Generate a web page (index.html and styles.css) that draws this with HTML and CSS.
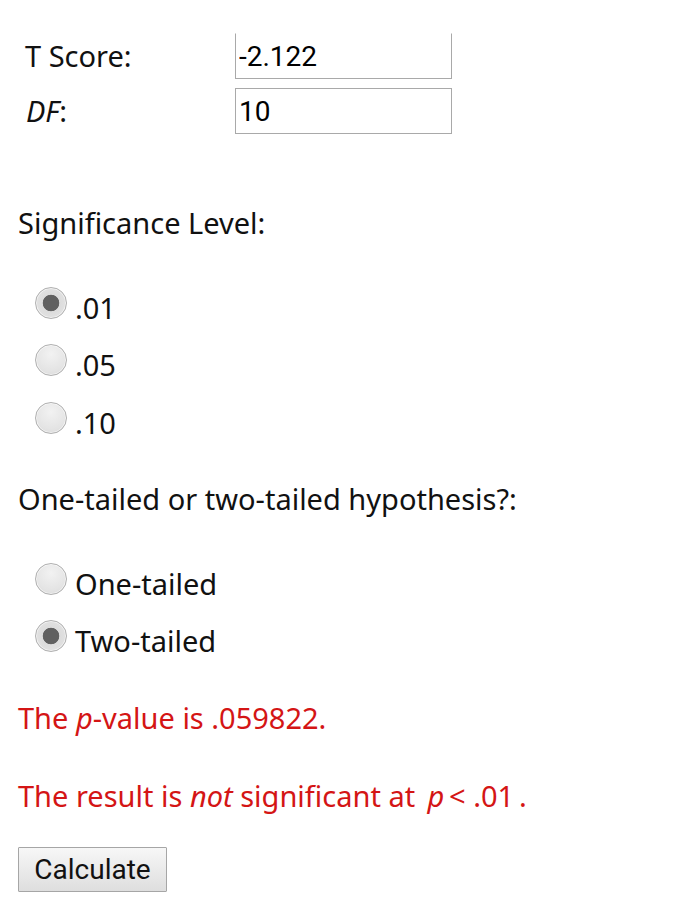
FILE: index.html
```html
<!DOCTYPE html>
<html>
<head>
<meta charset="utf-8">
<link rel="stylesheet" href="styles.css">
</head>
<body>
<div class="page">
  <div class="params">
    <label class="plabel">T Score:</label>
    <input class="pinput pinput-clipped" type="text" value="-2.122">
    <label class="plabel plabel-df"><i>DF</i>:</label>
    <input class="pinput" type="text" value="10">
  </div>

  <div class="heading heading-sig">Significance Level:</div>
  <div class="options">
    <label class="option"><input type="radio" name="sig" class="radio" checked>.01</label>
    <label class="option"><input type="radio" name="sig" class="radio">.05</label>
    <label class="option"><input type="radio" name="sig" class="radio">.10</label>
  </div>

  <div class="heading heading-tail">One-tailed or two-tailed hypothesis?:</div>
  <div class="options">
    <label class="option"><input type="radio" name="tail" class="radio">One-tailed</label>
    <label class="option"><input type="radio" name="tail" class="radio" checked>Two-tailed</label>
  </div>

  <p class="result result-p">The <i>p</i>-value is .059822.</p>
  <p class="result result-sig">The result is <i>not</i> significant at&thinsp; <i>p</i>&thinsp;&lt; .01&thinsp;.</p>

  <button class="calc" type="button">Calculate</button>
</div>
</body>
</html>
```

FILE: styles.css
```css
html, body {
  margin: 0;
  padding: 0;
  background: #fff;
}
body {
  font-family: "Noto Sans", "Open Sans", sans-serif;
  font-size: 29px;
  color: #111;
}
.page {
  padding: 33px 18px 0 18px;
}
.params {
  display: grid;
  grid-template-columns: 217px 217px;
  row-gap: 9px;
  align-items: center;
}
.plabel {
  padding-left: 7px;
  line-height: 46px;
}
.plabel-df {
  padding-left: 8px;
}
.pinput {
  box-sizing: border-box;
  width: 217px;
  height: 46px;
  margin: 0;
  padding: 0 3px;
  border: 1px solid #a9a9a9;
  font-family: Roboto, "Liberation Sans", sans-serif;
  font-size: 28px;
  color: #000;
  background: #fff;
  outline: none;
}
.pinput-clipped {
  border-top-color: transparent;
}
.heading {
  line-height: normal;
}
.heading-sig {
  margin-top: 69px;
}
.heading-tail {
  margin-top: 34.5px;
}
.options {
  display: flex;
  flex-direction: column;
  gap: 13.5px;
  margin-top: 43.5px;
}
.option {
  display: block;
  line-height: 44px;
}
.radio {
  -webkit-appearance: none;
  appearance: none;
  display: inline-block;
  box-sizing: border-box;
  width: 32px;
  height: 32px;
  margin: 0 8px 0 17px;
  border: 1px solid #b0b0b0;
  border-radius: 50%;
  background: radial-gradient(circle at 50% 30%, #f2f2f2 0%, #e4e4e4 65%, #d8d8d8 100%);
  box-shadow: inset 0 0 0 1px rgba(255,255,255,0.6);
  vertical-align: baseline;
}
.radio:checked {
  background: radial-gradient(circle, #606060 0, #606060 7.5px, #6a6a6a 8px, #dcdcdc 8.6px, #e6e6e6 100%);
}
.result {
  margin: 0;
  color: #d41515;
  line-height: normal;
}
.result-p {
  margin-top: 34.5px;
}
.result-sig {
  margin-top: 39.5px;
}
.calc {
  display: block;
  box-sizing: border-box;
  width: 149px;
  height: 45px;
  margin-top: 31.5px;
  padding: 0;
  border: 1px solid #a6a6a6;
  border-radius: 1px;
  background: linear-gradient(#f7f7f7, #dedede);
  font-family: Roboto, "Liberation Sans", sans-serif;
  font-size: 28px;
  color: #111;
}
```
